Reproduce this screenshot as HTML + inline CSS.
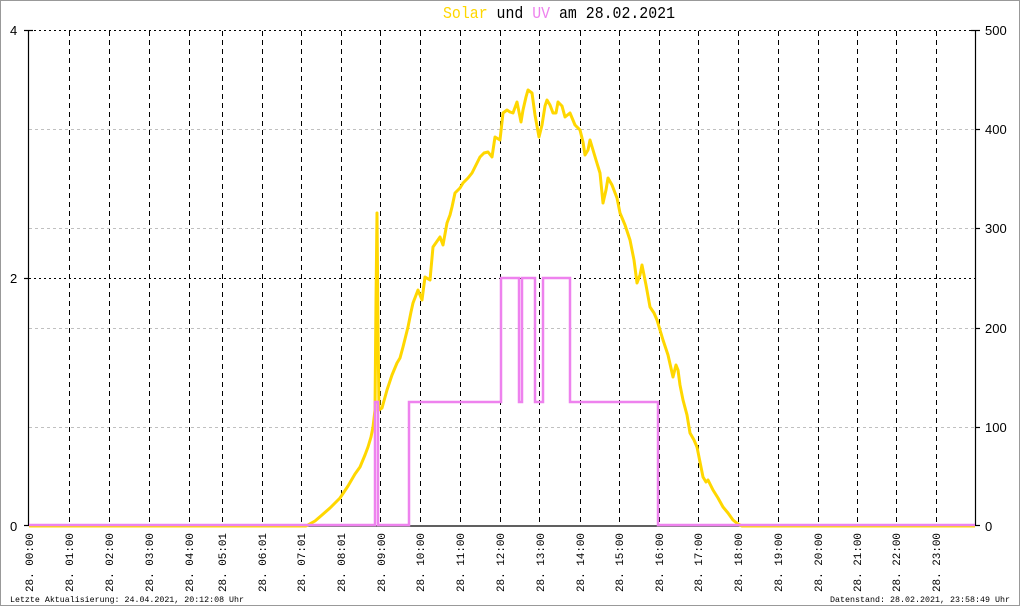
<!DOCTYPE html>
<html><head><meta charset="utf-8"><style>
html,body{margin:0;padding:0;background:#fff}
svg{display:block}
text{font-family:"Liberation Mono","DejaVu Sans Mono",monospace}
</style></head><body>
<svg width="1020" height="606" viewBox="0 0 1020 606" xmlns="http://www.w3.org/2000/svg">
<rect x="0.5" y="0.5" width="1019" height="605" fill="#fff" stroke="#999"/>
<text x="443" y="18" font-size="17" textLength="232" lengthAdjust="spacingAndGlyphs"><tspan fill="#FFD700">Solar</tspan> und <tspan fill="#EE82EE">UV</tspan> am 28.02.2021</text>
<g stroke="#c0c0c0" stroke-width="1" stroke-dasharray="3,3">
<line x1="29" y1="129.5" x2="975" y2="129.5"/>
<line x1="29" y1="228.5" x2="975" y2="228.5"/>
<line x1="29" y1="328.5" x2="975" y2="328.5"/>
<line x1="29" y1="427.5" x2="975" y2="427.5"/>
</g>
<g stroke="#000" stroke-width="1" stroke-dasharray="2,3">
<line x1="29" y1="30.5" x2="975" y2="30.5"/>
<line x1="29" y1="278.5" x2="975" y2="278.5"/>
</g>
<g stroke="#000" stroke-width="1" stroke-dasharray="5,4">
<line x1="69.5" y1="31" x2="69.5" y2="526"/><line x1="109.5" y1="31" x2="109.5" y2="526"/><line x1="149.5" y1="31" x2="149.5" y2="526"/><line x1="189.5" y1="31" x2="189.5" y2="526"/><line x1="222.5" y1="31" x2="222.5" y2="526"/><line x1="262.5" y1="31" x2="262.5" y2="526"/><line x1="301.5" y1="31" x2="301.5" y2="526"/><line x1="341.5" y1="31" x2="341.5" y2="526"/><line x1="380.5" y1="31" x2="380.5" y2="526"/><line x1="420.5" y1="31" x2="420.5" y2="526"/><line x1="460.5" y1="31" x2="460.5" y2="526"/><line x1="500.5" y1="31" x2="500.5" y2="526"/><line x1="539.5" y1="31" x2="539.5" y2="526"/><line x1="580.5" y1="31" x2="580.5" y2="526"/><line x1="619.5" y1="31" x2="619.5" y2="526"/><line x1="659.5" y1="31" x2="659.5" y2="526"/><line x1="698.5" y1="31" x2="698.5" y2="526"/><line x1="738.5" y1="31" x2="738.5" y2="526"/><line x1="778.5" y1="31" x2="778.5" y2="526"/><line x1="818.5" y1="31" x2="818.5" y2="526"/><line x1="857.5" y1="31" x2="857.5" y2="526"/><line x1="896.5" y1="31" x2="896.5" y2="526"/><line x1="936.5" y1="31" x2="936.5" y2="526"/>
</g>
<g stroke="#000" stroke-width="1.2">
<line x1="28.5" y1="30" x2="28.5" y2="526"/>
<line x1="975.5" y1="30" x2="975.5" y2="526"/>
<line x1="24" y1="30.5" x2="33" y2="30.5"/><line x1="24" y1="278.5" x2="29" y2="278.5"/><line x1="24" y1="525.5" x2="29" y2="525.5"/>
<line x1="971" y1="30.5" x2="980" y2="30.5"/><line x1="975" y1="129.5" x2="980" y2="129.5"/><line x1="975" y1="228.5" x2="980" y2="228.5"/><line x1="975" y1="328.5" x2="980" y2="328.5"/><line x1="975" y1="427.5" x2="980" y2="427.5"/><line x1="975" y1="525.5" x2="980" y2="525.5"/>
<line x1="29" y1="526" x2="975" y2="526"/>
</g>
<g font-size="13" fill="#000">
<text x="10" y="35" style="font-family:'Liberation Sans',sans-serif">4</text>
<text x="10" y="283" style="font-family:'Liberation Sans',sans-serif">2</text>
<text x="10" y="531" style="font-family:'Liberation Sans',sans-serif">0</text>
<text x="985" y="35" style="font-family:'Liberation Sans',sans-serif">500</text>
<text x="985" y="134" style="font-family:'Liberation Sans',sans-serif">400</text>
<text x="985" y="233" style="font-family:'Liberation Sans',sans-serif">300</text>
<text x="985" y="333" style="font-family:'Liberation Sans',sans-serif">200</text>
<text x="985" y="432" style="font-family:'Liberation Sans',sans-serif">100</text>
<text x="985" y="531" style="font-family:'Liberation Sans',sans-serif">0</text>
</g>
<polyline fill="none" stroke="#FFD700" stroke-width="3" stroke-linejoin="round" points="29,526 306,526 315,521 322,515 330,508 340,498 348,486 355,474 360,467 365,455 368,447 371,437 373,427 375,410 376,300 377,213 378,330 379,410 382,408 387,390 392,375 397,363 400,358 403,347 408,327 411,312 413,303 418,290 422,300 425,277 430,280 433,247 440,237 443,245 447,223 450,215 452,207 455,193 460,188 463,183 468,178 472,173 476,165 480,157 484,153 488,152 492,157 495,137 500,140 503,113 507,110 510,112 513,113 517,102 521,122 523,110 526,97 528,90 532,93 535,115 539,137 542,125 545,106 547,100 550,105 553,113 556,113 558,102 562,106 565,117 570,113 575,125 580,130 583,142 585,155 588,150 590,140 593,150 596,160 600,173 603,203 606,190 608,178 612,185 617,198 620,213 625,225 630,240 634,260 637,283 640,275 642,265 646,285 650,307 654,313 657,320 663,340 668,355 673,377 676,365 678,370 680,385 683,400 687,415 690,433 694,440 697,447 700,462 703,477 706,482 708,480 713,490 718,498 723,507 728,513 733,520 738,524 742,526 975,526"/>
<polyline fill="none" stroke="#EE82EE" stroke-width="2.5" points="29,525 375,525 375,402 378,402 378,525 409,525 409,402 501,402 501,278 519,278 519,402 522,402 522,278 535,278 535,402 543,402 543,278 570,278 570,402 658,402 658,525 975,525"/>
<g font-size="11" fill="#000">
<text transform="translate(33,592) rotate(-90)" textLength="59" lengthAdjust="spacingAndGlyphs">28. 00:00</text>
<text transform="translate(73,592) rotate(-90)" textLength="59" lengthAdjust="spacingAndGlyphs">28. 01:00</text>
<text transform="translate(113,592) rotate(-90)" textLength="59" lengthAdjust="spacingAndGlyphs">28. 02:00</text>
<text transform="translate(153,592) rotate(-90)" textLength="59" lengthAdjust="spacingAndGlyphs">28. 03:00</text>
<text transform="translate(193,592) rotate(-90)" textLength="59" lengthAdjust="spacingAndGlyphs">28. 04:00</text>
<text transform="translate(226,592) rotate(-90)" textLength="59" lengthAdjust="spacingAndGlyphs">28. 05:01</text>
<text transform="translate(266,592) rotate(-90)" textLength="59" lengthAdjust="spacingAndGlyphs">28. 06:01</text>
<text transform="translate(305,592) rotate(-90)" textLength="59" lengthAdjust="spacingAndGlyphs">28. 07:01</text>
<text transform="translate(345,592) rotate(-90)" textLength="59" lengthAdjust="spacingAndGlyphs">28. 08:01</text>
<text transform="translate(385,592) rotate(-90)" textLength="59" lengthAdjust="spacingAndGlyphs">28. 09:00</text>
<text transform="translate(424,592) rotate(-90)" textLength="59" lengthAdjust="spacingAndGlyphs">28. 10:00</text>
<text transform="translate(464,592) rotate(-90)" textLength="59" lengthAdjust="spacingAndGlyphs">28. 11:00</text>
<text transform="translate(504,592) rotate(-90)" textLength="59" lengthAdjust="spacingAndGlyphs">28. 12:00</text>
<text transform="translate(544,592) rotate(-90)" textLength="59" lengthAdjust="spacingAndGlyphs">28. 13:00</text>
<text transform="translate(584,592) rotate(-90)" textLength="59" lengthAdjust="spacingAndGlyphs">28. 14:00</text>
<text transform="translate(623,592) rotate(-90)" textLength="59" lengthAdjust="spacingAndGlyphs">28. 15:00</text>
<text transform="translate(663,592) rotate(-90)" textLength="59" lengthAdjust="spacingAndGlyphs">28. 16:00</text>
<text transform="translate(702,592) rotate(-90)" textLength="59" lengthAdjust="spacingAndGlyphs">28. 17:00</text>
<text transform="translate(742,592) rotate(-90)" textLength="59" lengthAdjust="spacingAndGlyphs">28. 18:00</text>
<text transform="translate(782,592) rotate(-90)" textLength="59" lengthAdjust="spacingAndGlyphs">28. 19:00</text>
<text transform="translate(822,592) rotate(-90)" textLength="59" lengthAdjust="spacingAndGlyphs">28. 20:00</text>
<text transform="translate(861,592) rotate(-90)" textLength="59" lengthAdjust="spacingAndGlyphs">28. 21:00</text>
<text transform="translate(900,592) rotate(-90)" textLength="59" lengthAdjust="spacingAndGlyphs">28. 22:00</text>
<text transform="translate(940,592) rotate(-90)" textLength="59" lengthAdjust="spacingAndGlyphs">28. 23:00</text>
</g>
<text x="10" y="602" font-size="8.5" textLength="234" lengthAdjust="spacingAndGlyphs">Letzte Aktualisierung: 24.04.2021, 20:12:08 Uhr</text>
<text x="830" y="602" font-size="8.5" textLength="180" lengthAdjust="spacingAndGlyphs">Datenstand: 28.02.2021, 23:58:49 Uhr</text>
</svg>
</body></html>
